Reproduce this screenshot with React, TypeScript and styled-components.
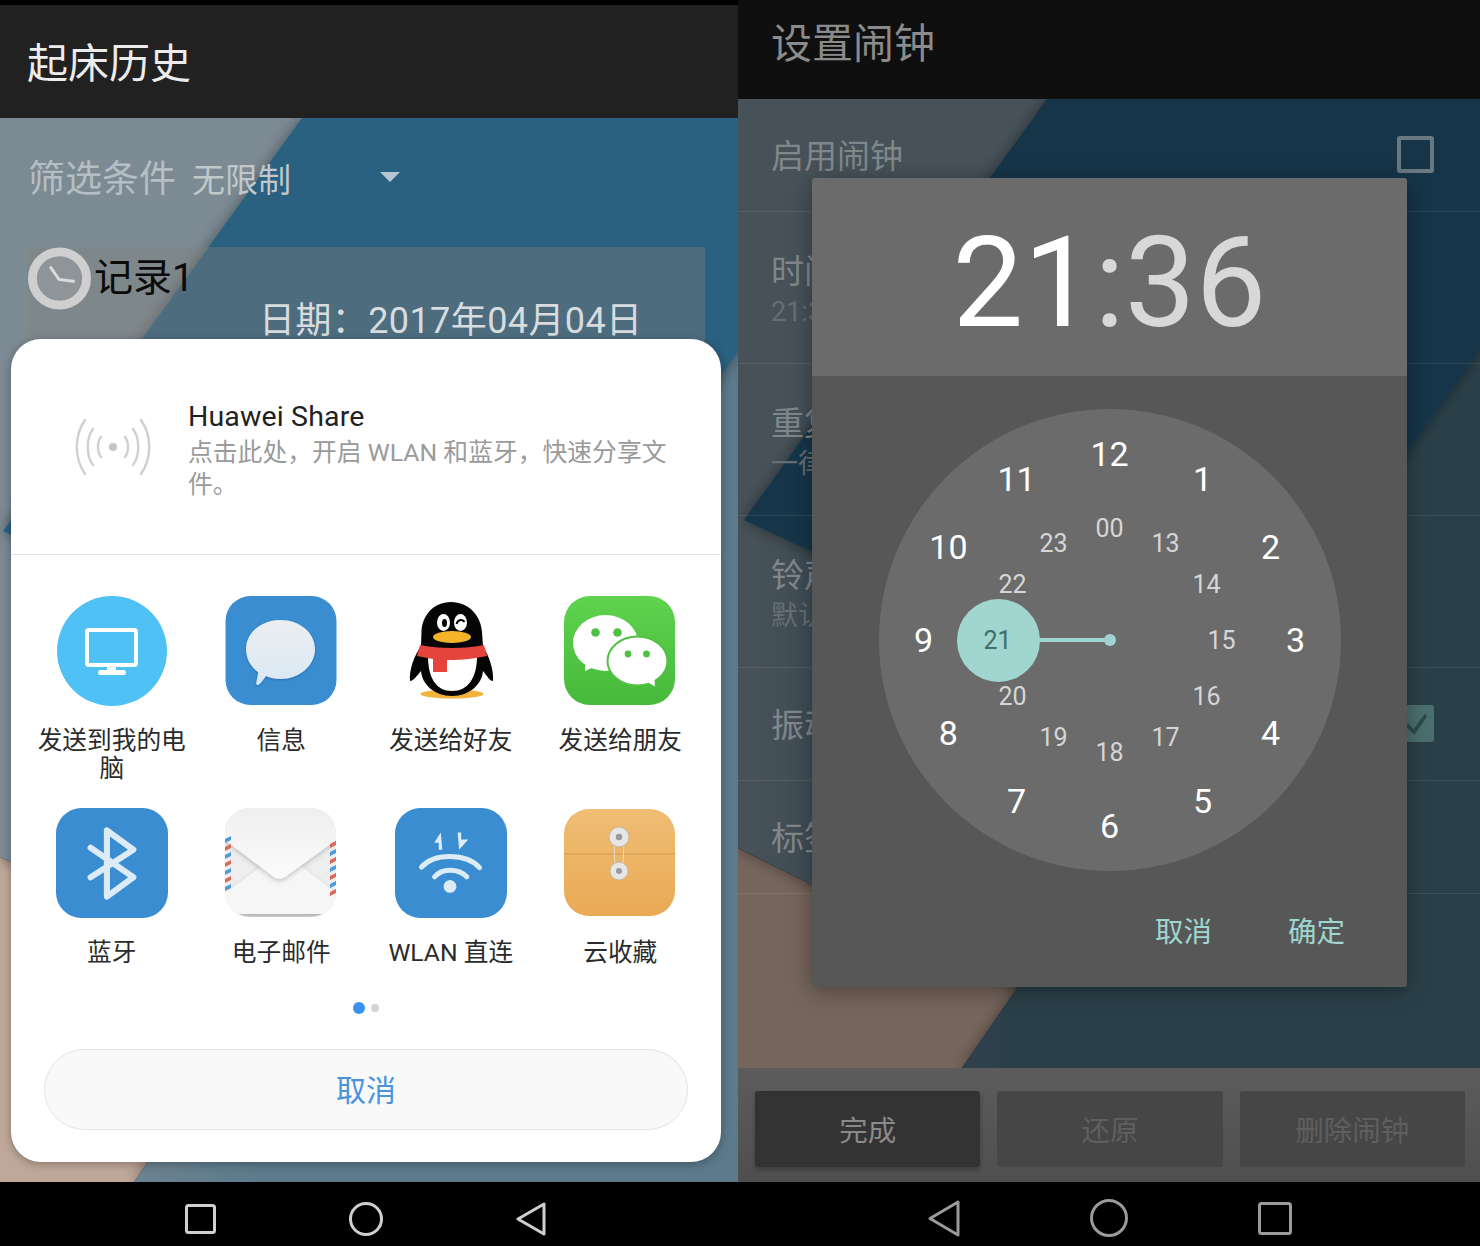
import React from 'react'
import styled, {createGlobalStyle} from 'styled-components'

const FONT = `Roboto, "Noto Sans CJK SC", sans-serif`

const GlobalStyle = createGlobalStyle`
  html, body {
    margin: 0;
    padding: 0;
    background: #000;
  }
  * {
    box-sizing: border-box;
  }
`

const polar = (index: number, count: number, radius: number) => {
    const angle = (index / count) * Math.PI * 2
    return {left: 231 + Math.sin(angle) * radius, top: 231 - Math.cos(angle) * radius}
}

const SHARE_ROW_ONE = [
    {label: '发送到我的电脑', icon: <PcIcon/>},
    {label: '信息', icon: <MessageIcon/>},
    {label: '发送给好友', icon: <QqIcon/>},
    {label: '发送给朋友', icon: <WechatIcon/>},
]

const SHARE_ROW_TWO = [
    {label: '蓝牙', icon: <BluetoothIcon/>},
    {label: '电子邮件', icon: <MailIcon/>},
    {label: 'WLAN 直连', icon: <WlanIcon/>},
    {label: '云收藏', icon: <FolderIcon/>},
]

const SETTINGS = [
    {title: '启用闹钟', height: 113},
    {title: '时间', sub: '21:36', height: 152},
    {title: '重复', sub: '一律', height: 152},
    {title: '铃声', sub: '默认', height: 152},
    {title: '振动', height: 113},
    {title: '标签', height: 113},
]

export default function App() {
    return (
        <Page>
            <GlobalStyle/>
            <Phone $width={738}>
                <StatusStrip/>
                <TitleBar $height={113} $bg="#212121">
                    <Title $color="#ececec" $offset={4}>起床历史</Title>
                </TitleBar>
                <Content>
                    <Wallpaper
                        id="left"
                        box="0 118 738 1064"
                        tan="#bfa899"
                        slateFrom="#7c8a93"
                        slateTo="#5b7a8b"
                        blue="#2a6180"
                        corner="0,118 302,118 3,531 0,531"
                        slate="0,118 738,118 738,1182 134,1182 278,977 0,857"
                        deep="3,531 302,118 738,118 738,352 455,745"
                        floor="0,857 278,977 134,1182 0,1182"
                    />
                    <FilterRow>
                        <FilterLabel>筛选条件</FilterLabel>
                        <FilterValue>无限制</FilterValue>
                        <Caret/>
                    </FilterRow>
                    <RecordCard>
                        <RecordHead>
                            <ClockBadge/>
                            <RecordName>记录1</RecordName>
                        </RecordHead>
                        <RecordDate>日期：2017年04月04日</RecordDate>
                    </RecordCard>
                    <ShareSheet>
                        <ShareHead>
                            <BroadcastIcon/>
                            <ShareText>
                                <ShareTitle>Huawei Share</ShareTitle>
                                <ShareHint>点击此处，开启 WLAN 和蓝牙，快速分享文件。</ShareHint>
                            </ShareText>
                        </ShareHead>
                        <ShareGrid>
                            {SHARE_ROW_ONE.map(item => (
                                <ShareItem key={item.label} $height={212}>
                                    {item.icon}
                                    <ShareLabel>{item.label}</ShareLabel>
                                </ShareItem>
                            ))}
                            {SHARE_ROW_TWO.map(item => (
                                <ShareItem key={item.label} $height={182}>
                                    {item.icon}
                                    <ShareLabel>{item.label}</ShareLabel>
                                </ShareItem>
                            ))}
                        </ShareGrid>
                        <Dots>
                            <Dot $active/>
                            <Dot/>
                        </Dots>
                        <CancelButton>取消</CancelButton>
                    </ShareSheet>
                </Content>
                <NavBar $gap={133} $color="#cfcfcf" $shift="10px 8px 0 0">
                    <NavSquare size={31} height={30}/>
                    <NavCircle size={34}/>
                    <NavBack size={30}/>
                </NavBar>
            </Phone>

            <Phone $width={742}>
                <TitleBar $height={99} $bg="#0f0f0f">
                    <Title $color="#8b8b8b" $offset={-11} $pad={33}>设置闹钟</Title>
                </TitleBar>
                <Content>
                    <Wallpaper
                        id="right"
                        box="738 99 742 969"
                        tan="#75655c"
                        slateFrom="#465158"
                        slateTo="#2c3f4a"
                        blue="#14364a"
                        corner="738,99 1047,99 744,520 738,520"
                        slate="738,99 1480,99 1480,1068 962,1068 1018,987 738,848"
                        deep="744,520 1047,99 1480,99 1480,350 1203,735"
                        floor="738,848 1018,987 962,1068 738,1068"
                    />
                    <SettingsList>
                        {SETTINGS.map((row, index) => (
                            <SettingRow key={row.title} $height={row.height}>
                                <SettingTitle>{row.title}</SettingTitle>
                                {row.sub && <SettingSub>{row.sub}</SettingSub>}
                                {index === 0 && <CheckBox/>}
                                {index === 4 && <CheckBox $checked><CheckMark/></CheckBox>}
                            </SettingRow>
                        ))}
                    </SettingsList>
                    <TimeDialog>
                        <DialogHead>
                            <BigTime>
                                21<BigTimeRest>:36</BigTimeRest>
                            </BigTime>
                        </DialogHead>
                        <DialogBody>
                            <Dial>
                                <Hand/>
                                <HandDot/>
                                <Selected/>
                                {Array.from({length: 12}, (_, i) => (
                                    <OuterNumber key={i} style={polar(i, 12, 186)}>{i === 0 ? 12 : i}</OuterNumber>
                                ))}
                                {Array.from({length: 12}, (_, i) => (
                                    <InnerNumber key={i} $selected={i === 9} style={polar(i, 12, 112)}>
                                        {i === 0 ? '00' : 12 + i}
                                    </InnerNumber>
                                ))}
                            </Dial>
                            <DialogActions>
                                <DialogAction>取消</DialogAction>
                                <DialogAction>确定</DialogAction>
                            </DialogActions>
                        </DialogBody>
                    </TimeDialog>
                </Content>
                <BottomBar>
                    <BarButton $primary>完成</BarButton>
                    <BarButton>还原</BarButton>
                    <BarButton>删除闹钟</BarButton>
                </BottomBar>
                <NavBar $gap={130} $color="#9a9a9a" $shift="8px 0 0 2px">
                    <NavBack size={32} height={37}/>
                    <NavCircle size={38}/>
                    <NavSquare size={34} height={33}/>
                </NavBar>
            </Phone>
        </Page>
    )
}

type WallpaperProps = {
    id: string
    box: string
    tan: string
    slateFrom: string
    slateTo: string
    blue: string
    corner: string
    slate: string
    deep: string
    floor: string
}

function Wallpaper({id, box, tan, slateFrom, slateTo, blue, corner, slate, deep, floor}: WallpaperProps) {
    return (
        <WallpaperSvg viewBox={box} preserveAspectRatio="none">
            <defs>
                <linearGradient id={`${id}-slate`} x1="0" y1="0" x2="1" y2="0">
                    <stop offset="0.02" stopColor={slateFrom}/>
                    <stop offset="0.36" stopColor={slateTo}/>
                </linearGradient>
                <filter id={`${id}-shadow`} x="-10%" y="-10%" width="120%" height="120%">
                    <feDropShadow dx="0" dy="0" stdDeviation="7" floodColor="#000" floodOpacity="0.4"/>
                </filter>
            </defs>
            <polygon points={floor} fill={tan}/>
            <polygon points={slate} fill={`url(#${id}-slate)`} filter={`url(#${id}-shadow)`}/>
            <polygon points={corner} fill={slateFrom}/>
            <polygon points={deep} fill={blue} filter={`url(#${id}-shadow)`}/>
        </WallpaperSvg>
    )
}

function ClockBadge() {
    return (
        <ClockSvg viewBox="0 0 65 64">
            <ellipse cx="32.5" cy="32" rx="27.5" ry="27" fill="#8e9498" stroke="#cfcfcf" strokeWidth="9"/>
            <path d="M23 20 L32 33 L48 35" fill="none" stroke="#dcdcdc" strokeWidth="3"/>
        </ClockSvg>
    )
}

function BroadcastIcon() {
    return (
        <BroadcastSvg viewBox="0 0 76 62">
            <g fill="none" stroke="#d0d0d0" strokeWidth="2.4" strokeLinecap="round">
                <path d="M26 21 C22 26 22 36 26 41"/>
                <path d="M50 21 C54 26 54 36 50 41"/>
                <path d="M18 13 C11 22 11 40 18 49"/>
                <path d="M58 13 C65 22 65 40 58 49"/>
                <path d="M10 4 C-1 20 -1 42 10 58"/>
                <path d="M66 4 C77 20 77 42 66 58"/>
            </g>
            <circle cx="38" cy="31" r="4" fill="#c4c4c4"/>
        </BroadcastSvg>
    )
}

function PcIcon() {
    return (
        <IconSvg viewBox="0 0 112 110">
            <circle cx="56" cy="55" r="55" fill="#4fc1f4"/>
            <rect x="31" y="34" width="49" height="35" rx="2" fill="none" stroke="#fff" strokeWidth="4"/>
            <rect x="51" y="70" width="9" height="6" fill="#fff"/>
            <rect x="42" y="74" width="28" height="5" rx="2.5" fill="#fff"/>
        </IconSvg>
    )
}

function MessageIcon() {
    return (
        <IconSvg viewBox="0 0 112 110">
            <defs>
                <linearGradient id="msg-bubble" x1="0" y1="0" x2="0" y2="1">
                    <stop offset="0" stopColor="#eceef1"/>
                    <stop offset="1" stopColor="#d9e8f4"/>
                </linearGradient>
                <filter id="msg-soft" x="-10%" y="-10%" width="120%" height="120%">
                    <feDropShadow dx="0" dy="1" stdDeviation="1" floodColor="#0b4f8a" floodOpacity="0.5"/>
                </filter>
            </defs>
            <rect x="0.5" y="0" width="111" height="109" rx="25" fill="#3a8dd1"/>
            <path d="M55.5 24 C75 24 90 37 90 53 C90 70 74 83 55.5 83 C50 83 45 82 41 80 C38 84 35 89 32 89 C30 89 33 82 33 76 C25 70 21 62 21 53 C21 37 36 24 55.5 24 Z" fill="url(#msg-bubble)" filter="url(#msg-soft)"/>
        </IconSvg>
    )
}

function QqIcon() {
    return (
        <IconSvg viewBox="0 0 110 110">
            <ellipse cx="56" cy="98" rx="31.5" ry="4.5" fill="#f2b33d"/>
            <path d="M55 6 C37 6 26 20 25.5 36 L25 50 C18 60 13 74 14 85 C17 85 21 80 25 75 C26 88 38 100 56 100 C74 100 86 88 87 75 C91 80 94 85 97 85 C98 74 93 60 87 50 L86 36 C85 20 73 6 55 6 Z" fill="#050505"/>
            <path d="M32 60 C32 82 40 95 56 95 C72 95 81 82 81 60 Z" fill="#fff"/>
            <ellipse cx="47.5" cy="26.5" rx="6.5" ry="8.5" fill="#fff"/>
            <ellipse cx="64.5" cy="26.5" rx="6.5" ry="8.5" fill="#fff"/>
            <ellipse cx="48.5" cy="27" rx="2.5" ry="4" fill="#050505"/>
            <path d="M60.5 28 C62 23 67 23 68.5 26" fill="none" stroke="#050505" strokeWidth="2"/>
            <ellipse cx="56" cy="41" rx="19" ry="6" fill="#f5b32a"/>
            <path d="M24 49 C42 53 70 53 88 49 L91 60 C72 64 60 64 51 64 L51 76 L37 76 L37 63 C31 62 26 61 21 60 Z" fill="#e4443b"/>
        </IconSvg>
    )
}

function WechatIcon() {
    return (
        <IconSvg viewBox="0 0 112 110">
            <defs>
                <linearGradient id="wechat-bg" x1="0" y1="0" x2="0" y2="1">
                    <stop offset="0" stopColor="#5fd24e"/>
                    <stop offset="1" stopColor="#47b93a"/>
                </linearGradient>
            </defs>
            <rect x="0" y="0" width="111" height="109" rx="26" fill="url(#wechat-bg)"/>
            <ellipse cx="41.5" cy="47" rx="32.5" ry="28" fill="#fff"/>
            <path d="M22 63 L21 75 L34 69 Z" fill="#fff"/>
            <circle cx="31.5" cy="36.5" r="4.3" fill="#4fc142"/>
            <circle cx="53.5" cy="36.5" r="4.3" fill="#4fc142"/>
            <ellipse cx="73.5" cy="65" rx="30" ry="24.5" fill="#fff" stroke="#4fc142" strokeWidth="2"/>
            <path d="M80 84 L91 90.5 L90 78 Z" fill="#fff"/>
            <circle cx="64" cy="58" r="3.4" fill="#4fc142"/>
            <circle cx="82.5" cy="58" r="3.4" fill="#4fc142"/>
        </IconSvg>
    )
}

function BluetoothIcon() {
    return (
        <IconSvg viewBox="0 0 110 108">
            <rect x="0" y="0" width="110" height="108" rx="25" fill="#3a8dd1"/>
            <path d="M34 39 L76 68 L50 87 V22 L76 41 L34 68" fill="none" stroke="#dcebf6" strokeWidth="6" strokeLinejoin="round" strokeLinecap="round"/>
        </IconSvg>
    )
}

function MailIcon() {
    const left = ['#4d9bd8', '#d9695d', '#4d9bd8', '#d9695d', '#4d9bd8', '#d9695d', '#4d9bd8']
    const right = ['#d9695d', '#4d9bd8', '#d9695d', '#4d9bd8', '#d9695d', '#4d9bd8', '#d9695d']
    return (
        <IconSvg viewBox="0 0 112 110">
            <defs>
                <linearGradient id="mail-flap" x1="0" y1="0" x2="0" y2="1">
                    <stop offset="0" stopColor="#efefef"/>
                    <stop offset="1" stopColor="#fbfbfb"/>
                </linearGradient>
                <filter id="mail-shadow" x="-10%" y="-10%" width="120%" height="130%">
                    <feDropShadow dx="0" dy="2" stdDeviation="2.5" floodColor="#000" floodOpacity="0.22"/>
                </filter>
                <clipPath id="mail-clip">
                    <rect x="0" y="0" width="111" height="109" rx="25"/>
                </clipPath>
            </defs>
            <rect x="0" y="0" width="111" height="109" rx="25" fill="#dcdcdc"/>
            <g clipPath="url(#mail-clip)">
                <rect x="0" y="0" width="111" height="106" fill="#eeeeee"/>
                <path d="M0 85 L37 58 L76 58 L111 85 L111 106 L0 106 Z" fill="#f6f6f6" filter="url(#mail-shadow)"/>
                <path d="M0 0 H111 V32 L60 69 C56 71 52 71 49 69 L0 32 Z" fill="url(#mail-flap)" filter="url(#mail-shadow)"/>
                {left.map((color, i) => (
                    <polygon key={i} points={`0,${31 + i * 8} 6,${28 + i * 8} 6,${32 + i * 8} 0,${35 + i * 8}`} fill={color}/>
                ))}
                {right.map((color, i) => (
                    <polygon key={i} points={`105,${36 + i * 8} 111,${33 + i * 8} 111,${37 + i * 8} 105,${40 + i * 8}`} fill={color}/>
                ))}
            </g>
        </IconSvg>
    )
}

function WlanIcon() {
    return (
        <IconSvg viewBox="0 0 110 108">
            <rect x="0" y="0" width="110" height="108" rx="25" fill="#3a8dd1"/>
            <path d="M45 24 L46.5 41 L43 41 L43 34 L38.5 34 Z" fill="#dcebf6"/>
            <path d="M63 41 L61.5 24 L65 24 L65 31 L72 31 Z" fill="#dcebf6"/>
            <path d="M26 58 C38 44 70 44 83 58.5" fill="none" stroke="#dcebf6" strokeWidth="5" strokeLinecap="round"/>
            <path d="M39 67.5 C46 59 62 59 70.5 67.5" fill="none" stroke="#dcebf6" strokeWidth="5" strokeLinecap="round"/>
            <circle cx="54" cy="77" r="6.3" fill="#dcebf6"/>
        </IconSvg>
    )
}

function FolderIcon() {
    return (
        <IconSvg viewBox="0 0 112 108">
            <defs>
                <linearGradient id="folder-bg" x1="0" y1="0" x2="0" y2="1">
                    <stop offset="0" stopColor="#efbd74"/>
                    <stop offset="1" stopColor="#e9aa55"/>
                </linearGradient>
            </defs>
            <rect x="0" y="0" width="111" height="107" rx="25" fill="url(#folder-bg)"/>
            <line x1="0" y1="45" x2="111" y2="45" stroke="#d69a4c" strokeWidth="1.2"/>
            <path d="M50 30 L51 60 M60 30 L59 60" stroke="#e4ddd0" strokeWidth="1"/>
            <circle cx="55" cy="28" r="10" fill="#e6e6e6" stroke="#c9b79b"/>
            <circle cx="55" cy="28" r="3.2" fill="#9a9a9a"/>
            <circle cx="55" cy="62" r="9" fill="#e6e6e6" stroke="#c9b79b"/>
            <circle cx="55" cy="62" r="3" fill="#9a9a9a"/>
        </IconSvg>
    )
}

type NavIconProps = { size: number, height?: number }

function NavSquare({size, height = size}: NavIconProps) {
    return (
        <svg width={size} height={height} viewBox={`0 0 ${size} ${height}`}>
            <rect x="1.5" y="1.5" width={size - 3} height={height - 3} rx="2" fill="none" stroke="currentColor" strokeWidth="3"/>
        </svg>
    )
}

function NavCircle({size}: NavIconProps) {
    return (
        <svg width={size} height={size} viewBox={`0 0 ${size} ${size}`}>
            <circle cx={size / 2} cy={size / 2} r={size / 2 - 1.5} fill="none" stroke="currentColor" strokeWidth="3"/>
        </svg>
    )
}

function NavBack({size, height = 34}: NavIconProps) {
    return (
        <svg width={size} height={height} viewBox={`0 0 ${size} ${height}`}>
            <path d={`M${size - 2} 2 V${height - 2} L2 ${height / 2} Z`} fill="none" stroke="currentColor" strokeWidth="3" strokeLinejoin="round"/>
        </svg>
    )
}

function CheckMark() {
    return (
        <svg width="26" height="26" viewBox="0 0 26 26">
            <path d="M4 14 L11 21 L23 4" fill="none" stroke="#2e4a4c" strokeWidth="3.5"/>
        </svg>
    )
}

const Page = styled.div`
  display: flex;
  width: 1480px;
  height: 1246px;
  overflow: hidden;
  font-family: ${FONT};
`

const Phone = styled.div<{ $width: number }>`
  display: flex;
  flex-direction: column;
  flex: none;
  width: ${p => p.$width}px;
  height: 100%;
`

const StatusStrip = styled.div`
  flex: none;
  height: 5px;
  background: #000;
`

const TitleBar = styled.div<{ $height: number, $bg: string }>`
  flex: none;
  display: flex;
  align-items: center;
  height: ${p => p.$height}px;
  background: ${p => p.$bg};
`

const Title = styled.div<{ $color: string, $offset?: number, $pad?: number }>`
  margin-top: ${p => p.$offset ?? 0}px;
  padding-left: ${p => p.$pad ?? 27}px;
  font-size: 41px;
  line-height: 48px;
  color: ${p => p.$color};
`

const Content = styled.div`
  position: relative;
  flex: 1;
  min-height: 0;
  overflow: hidden;
`

const WallpaperSvg = styled.svg`
  position: absolute;
  inset: 0;
  width: 100%;
  height: 100%;
`

const FilterRow = styled.div`
  position: relative;
  display: flex;
  align-items: center;
  height: 120px;
  padding: 0 0 4px 28px;
`

const FilterLabel = styled.span`
  font-size: 37px;
  color: #b4bec4;
`

const FilterValue = styled.span`
  margin: 4px 0 0 16px;
  font-size: 33px;
  color: #c0c8cc;
`

const Caret = styled.span`
  width: 0;
  height: 0;
  margin: 2px 0 0 89px;
  border-left: 10px solid transparent;
  border-right: 10px solid transparent;
  border-top: 10px solid #b5c6d0;
`

const RecordCard = styled.div`
  position: relative;
  width: 678px;
  height: 230px;
  margin: 9px 0 0 27px;
  background: rgba(130, 130, 125, 0.4);
`

const RecordHead = styled.div`
  display: flex;
  align-items: center;
  height: 63px;
`

const ClockSvg = styled.svg`
  flex: none;
  width: 65px;
  height: 63px;
`

const RecordName = styled.span`
  margin: -10px 0 0 2px;
  font-size: 39px;
  color: #0a0a0a;
`

const RecordDate = styled.div`
  margin: -10px 0 0 232px;
  font-size: 36px;
  letter-spacing: 0.4px;
  line-height: 42px;
  color: #d8dcdf;
`

const ShareSheet = styled.div`
  position: absolute;
  left: 11px;
  top: 221px;
  width: 710px;
  height: 823px;
  padding: 0 16px;
  background: #fff;
  border-radius: 30px;
  box-shadow: 0 2px 10px rgba(0, 0, 0, 0.3);
`

const ShareHead = styled.div`
  display: flex;
  align-items: center;
  height: 216px;
  margin: 0 -16px;
  padding: 0 0 0 64px;
  border-bottom: 1px solid #e2e2e2;
`

const BroadcastSvg = styled.svg`
  flex: none;
  width: 76px;
  height: 62px;
`

const ShareText = styled.div`
  width: 482px;
  margin-left: 37px;
  padding-top: 8px;
`

const ShareTitle = styled.div`
  font-size: 28.5px;
  line-height: 32px;
  letter-spacing: 0.15px;
  color: #222;
`

const ShareHint = styled.div`
  margin-top: 4px;
  font-size: 24.8px;
  line-height: 32px;
  color: #9a9a9a;
`

const ShareGrid = styled.div`
  display: grid;
  grid-template-columns: repeat(4, 1fr);
  padding-top: 41px;
`

const ShareItem = styled.div<{ $height: number }>`
  display: flex;
  flex-direction: column;
  align-items: center;
  height: ${p => p.$height}px;
`

const IconSvg = styled.svg`
  flex: none;
  width: 112px;
  height: 110px;
`

const ShareLabel = styled.div`
  width: 152px;
  margin-top: 21px;
  font-size: 24.7px;
  line-height: 28px;
  text-align: center;
  color: #2b2b2b;
`

const Dots = styled.div`
  display: flex;
  align-items: center;
  justify-content: center;
  gap: 6px;
  height: 12px;
  margin-top: 12px;
`

const Dot = styled.span<{ $active?: boolean }>`
  width: ${p => (p.$active ? 12 : 8)}px;
  height: ${p => (p.$active ? 12 : 8)}px;
  border-radius: 50%;
  background: ${p => (p.$active ? '#3a90ee' : '#d4d4d4')};
`

const CancelButton = styled.div`
  display: flex;
  align-items: center;
  justify-content: center;
  width: 644px;
  height: 81px;
  margin: 35px 0 0 17px;
  padding-bottom: 3px;
  background: #f9f9f9;
  border: 1px solid #e3e3e3;
  border-radius: 41px;
  font-size: 30px;
  color: #4a93dc;
`

const NavBar = styled.div<{ $gap: number, $color: string, $shift: string }>`
  flex: none;
  display: flex;
  align-items: center;
  justify-content: center;
  gap: ${p => p.$gap}px;
  height: 64px;
  padding: ${p => p.$shift};
  background: #000;
  color: ${p => p.$color};
`

const SettingsList = styled.div`
  position: relative;
`

const SettingRow = styled.div<{ $height: number }>`
  position: relative;
  display: flex;
  flex-direction: column;
  justify-content: center;
  height: ${p => p.$height}px;
  padding: 4px 0 0 33px;
  border-bottom: 1px solid rgba(255, 255, 255, 0.09);
`

const SettingTitle = styled.div`
  font-size: 33px;
  line-height: 44px;
  color: #80878b;
`

const SettingSub = styled.div`
  font-size: 27px;
  line-height: 36px;
  color: #666e73;
`

const CheckBox = styled.div<{ $checked?: boolean }>`
  position: absolute;
  right: 46px;
  top: 50%;
  display: flex;
  align-items: center;
  justify-content: center;
  width: 37px;
  height: 37px;
  margin-top: -19px;
  border-radius: 3px;
  border: ${p => (p.$checked ? 'none' : '4px solid #6a7882')};
  background: ${p => (p.$checked ? '#4b6f6e' : 'transparent')};
`

const TimeDialog = styled.div`
  position: absolute;
  left: 74px;
  top: 79px;
  display: flex;
  flex-direction: column;
  width: 595px;
  height: 809px;
  border-radius: 3px;
  overflow: hidden;
  box-shadow: 0 4px 22px rgba(0, 0, 0, 0.35);
`

const DialogHead = styled.div`
  flex: none;
  display: flex;
  align-items: center;
  justify-content: center;
  height: 198px;
  padding-top: 11px;
  background: #6b6b6b;
`

const BigTime = styled.div`
  font-size: 126px;
  font-weight: 400;
  line-height: 1;
  color: #fff;
`

const BigTimeRest = styled.span`
  color: #d8d8d8;
`

const DialogBody = styled.div`
  flex: 1;
  display: flex;
  flex-direction: column;
  align-items: center;
  padding-top: 33px;
  background: #575757;
`

const Dial = styled.div`
  position: relative;
  flex: none;
  width: 462px;
  height: 462px;
  border-radius: 50%;
  background: #6b6b6b;
`

const Hand = styled.div`
  position: absolute;
  left: 160px;
  top: 229px;
  width: 71px;
  height: 4px;
  background: #9fd3ce;
`

const HandDot = styled.div`
  position: absolute;
  left: 225px;
  top: 225px;
  width: 12px;
  height: 12px;
  border-radius: 50%;
  background: #9fd3ce;
`

const Selected = styled.div`
  position: absolute;
  left: 78px;
  top: 190px;
  width: 83px;
  height: 83px;
  border-radius: 50%;
  background: #a1d5d0;
`

const OuterNumber = styled.span`
  position: absolute;
  transform: translate(-50%, -50%);
  font-size: 34px;
  line-height: 1;
  color: #fff;
`

const InnerNumber = styled.span<{ $selected?: boolean }>`
  position: absolute;
  transform: translate(-50%, -50%);
  font-size: 25px;
  line-height: 1;
  color: ${p => (p.$selected ? '#3f6e6d' : '#d6d6d6')};
`

const DialogActions = styled.div`
  align-self: flex-end;
  display: flex;
  gap: 76px;
  margin-top: 40px;
  padding-right: 62px;
`

const DialogAction = styled.span`
  font-size: 28.5px;
  line-height: 44px;
  color: #9fd6d0;
`

const BottomBar = styled.div`
  flex: none;
  display: flex;
  gap: 17px;
  height: 114px;
  padding: 23px 15px 0 17px;
  background: linear-gradient(#5c5c5c, #4f4f4f);
`

const BarButton = styled.div<{ $primary?: boolean }>`
  flex: 1;
  display: flex;
  align-items: center;
  justify-content: center;
  height: 76px;
  padding-bottom: 2px;
  border-radius: 3px;
  font-size: 28.5px;
  background: ${p => (p.$primary ? '#333' : '#464646')};
  color: ${p => (p.$primary ? '#8a8a8a' : '#5f5f5f')};
  box-shadow: ${p => (p.$primary ? '0 3px 5px rgba(0, 0, 0, 0.25)' : 'none')};
`
